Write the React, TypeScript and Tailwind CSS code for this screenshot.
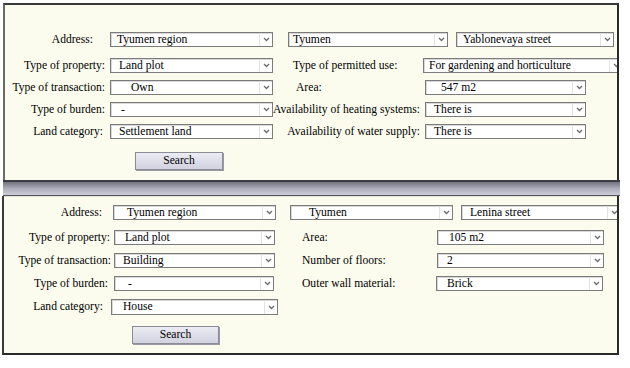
import React from "react";

type SelectProps = {
  text: string;
  className: string; // width + margin
  textClass?: string;
};

const Chevron = () => (
  <svg width="7" height="5" viewBox="0 0 7 5" className="block">
    <path d="M1 1 L3.5 3.5 L6 1" fill="none" stroke="#6b6b6b" strokeWidth="1.3" />
  </svg>
);

const Select = ({ text, className, textClass = "pl-[6px]" }: SelectProps) => (
  <div
    className={`flex h-[15px] shrink-0 items-stretch border border-[#7b7b7b] bg-white shadow-[inset_1px_1px_0_#d8d8d8] ${className}`}
  >
    <span className={`flex-1 overflow-hidden whitespace-nowrap leading-[13px] ${textClass}`}>
      {text}
    </span>
    <span className="flex w-[13px] items-center justify-center border-l border-[#e2e2e2]">
      <Chevron />
    </span>
  </div>
);

const SearchButton = ({ className }: { className: string }) => (
  <div
    className={`flex h-[18px] items-center justify-center border border-[#8c8c96] bg-gradient-to-b from-[#ececf4] to-[#d2d2e0] shadow-[1px_1px_0_#9a9aa4] ${className}`}
  >
    Search
  </div>
);

const App = () => {
  return (
    <div className="relative h-[368px] w-[630px] overflow-hidden bg-white font-['Liberation_Serif'] text-[11.6px] leading-[14px] text-black">
      {/* top panel */}
      <div className="ml-[3px] mt-[3px] h-[177px] w-[616px] overflow-hidden border-l-2 border-r-2 border-t-2 border-l-[#6a6a6a] border-r-[#2a2a2a] border-t-[#3a3a3a] bg-[#fcfcee] pt-[27px]">
        <div className="flex flex-col">
          <div className="flex items-center">
            <span className="w-[88px] shrink-0 text-right">Address:</span>
            <Select text="Tyumen region" className="ml-[17px] w-[163px]" />
            <Select text="Tyumen" className="ml-[15px] w-[160px]" textClass="pl-[4px]" />
            <Select text="Yablonevaya street" className="ml-[8px] w-[158px]" />
          </div>
          <div className="mt-[11px] flex items-center">
            <span className="w-[100px] shrink-0 text-right">Type of property:</span>
            <Select text="Land plot" className="ml-[5px] w-[163px]" textClass="pl-[8px]" />
            <span className="w-[150px] shrink-0 whitespace-nowrap pl-[20px]">Type of permitted use:</span>
            <Select text="For gardening and horticulture" className="w-[200px]" textClass="pl-[5px]" />
          </div>
          <div className="mt-[7px] flex items-center">
            <span className="w-[100px] shrink-0 whitespace-nowrap text-right">Type of transaction:</span>
            <Select text="Own" className="ml-[5px] w-[163px]" textClass="pl-[20px]" />
            <span className="w-[152px] shrink-0 pl-[23px]">Area:</span>
            <Select text="547 m2" className="w-[161px]" textClass="pl-[15px]" />
          </div>
          <div className="mt-[7px] flex items-center">
            <span className="w-[100px] shrink-0 text-right">Type of burden:</span>
            <Select text="-" className="ml-[5px] w-[163px]" textClass="pl-[10px]" />
            <span className="w-[147px] shrink-0 whitespace-nowrap text-right">
              Availability of heating systems:
            </span>
            <Select text="There is" className="ml-[5px] w-[161px]" textClass="pl-[8px]" />
          </div>
          <div className="mt-[7px] flex items-center">
            <span className="w-[98px] shrink-0 text-right">Land category:</span>
            <Select text="Settlement land" className="ml-[7px] w-[163px]" textClass="pl-[8px]" />
            <span className="w-[147px] shrink-0 whitespace-nowrap text-right">
              Availability of water supply:
            </span>
            <Select text="There is" className="ml-[5px] w-[161px]" textClass="pl-[8px]" />
          </div>
        </div>
        <SearchButton className="ml-[130px] mt-[13px] w-[88px]" />
      </div>

      {/* divider bar */}
      <div className="ml-[3px] h-[16px] w-[617px] border-t-2 border-b border-t-[#3c3c44] border-b-[#55555e] bg-gradient-to-b from-[#74747f] via-[#acacbb] to-[#cdcdd9]" />

      {/* bottom panel */}
      <div className="ml-[2px] h-[159px] w-[617px] overflow-hidden border-b-2 border-l-2 border-r-2 border-b-[#2a2a2a] border-l-[#3a3a3a] border-r-[#2a2a2a] bg-[#fcfcee] pt-[9px] shadow-[inset_0_1px_0_#e4e4dc]">
        <div className="flex flex-col">
          <div className="flex items-center">
            <span className="w-[98px] shrink-0 text-right">Address:</span>
            <Select text="Tyumen region" className="ml-[11px] w-[163px]" textClass="pl-[13px]" />
            <Select text="Tyumen" className="ml-[14px] w-[163px]" textClass="pl-[18px]" />
            <Select text="Lenina street" className="ml-[8px] w-[160px]" textClass="pl-[8px]" />
          </div>
          <div className="mt-[10px] flex items-center">
            <span className="w-[106px] shrink-0 text-right">Type of property:</span>
            <Select text="Land plot" className="ml-[4px] w-[161px]" textClass="pl-[10px]" />
            <span className="w-[162px] shrink-0 pl-[27px]">Area:</span>
            <Select text="105 m2" className="w-[167px]" textClass="pl-[11px]" />
          </div>
          <div className="mt-[8px] flex items-center">
            <span className="w-[107px] shrink-0 whitespace-nowrap text-right">Type of transaction:</span>
            <Select text="Building" className="ml-[3px] w-[161px]" textClass="pl-[8px]" />
            <span className="w-[162px] shrink-0 pl-[27px]">Number of floors:</span>
            <Select text="2" className="w-[167px]" textClass="pl-[9px]" />
          </div>
          <div className="mt-[8px] flex items-center">
            <span className="w-[104px] shrink-0 text-right">Type of burden:</span>
            <Select text="-" className="ml-[6px] w-[160px]" textClass="pl-[13px]" />
            <span className="w-[162px] shrink-0 whitespace-nowrap pl-[28px]">Outer wall material:</span>
            <Select text="Brick" className="w-[167px]" textClass="pl-[10px]" />
          </div>
          <div className="mt-[8px] flex items-center">
            <span className="w-[99px] shrink-0 text-right">Land category:</span>
            <Select text="House" className="ml-[8px] h-[16px] w-[167px]" textClass="pl-[11px]" />
          </div>
        </div>
        <SearchButton className="ml-[128px] mt-[11px] w-[87px]" />
      </div>
    </div>
  );
};

export default App;
